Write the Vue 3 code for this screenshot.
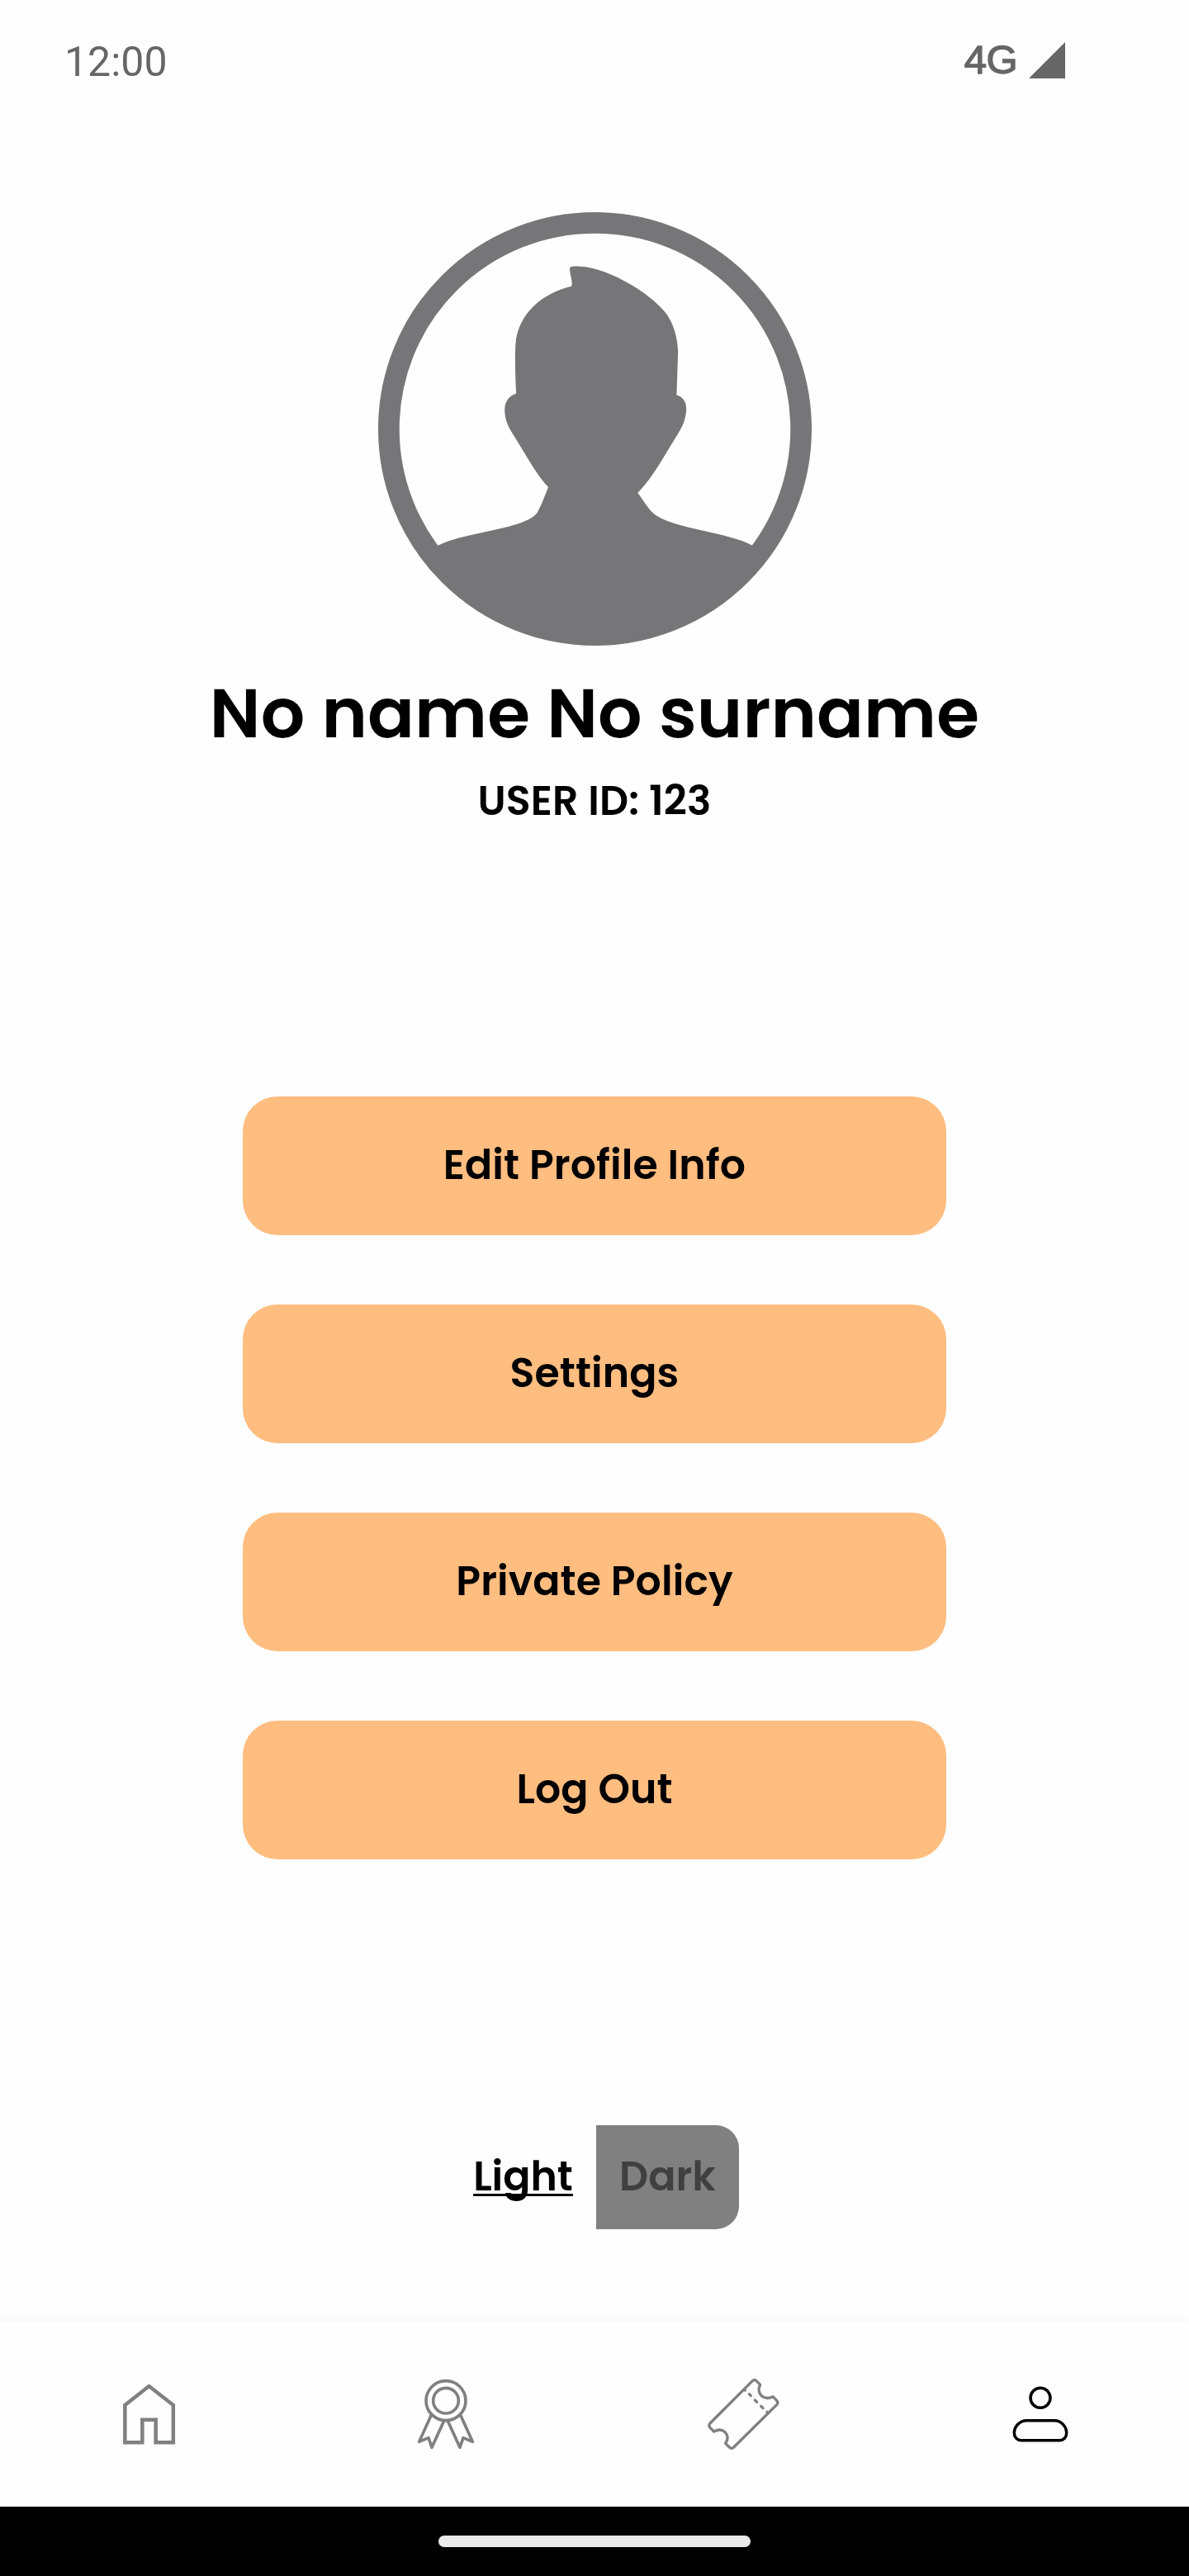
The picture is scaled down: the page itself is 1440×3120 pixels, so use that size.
<script setup>
import { ref } from 'vue'

const actions = ['Edit Profile Info', 'Settings', 'Private Policy', 'Log Out']
const theme = ref('light')
</script>

<template>
  <div class="screen">
    <header class="status">
      <span class="clock">12:00</span>
      <div class="network">
        <span class="net-label">4G</span>
        <svg class="signal" viewBox="0 0 44 44"><path d="M44 0V44H0Z" fill="#666" /></svg>
      </div>
    </header>

    <section class="profile">
      <svg class="avatar" viewBox="50 48 1470 1470">
        <circle cx="785" cy="783" r="699" fill="none" stroke="#767678" stroke-width="72" />
        <path
          fill="#767678"
          d="M254 1178C340 1132 540 1125 588 1069C602 1046 614 1013 627 980C590 945 545 860 502 793C487 768 479 745 479 718C479 688 497 669 518 663C515 600 513 540 516 495C523 395 605 322 705 299C713 290 697 250 700 237C702 230 718 231 736 232C820 235 960 312 1023 387C1052 424 1064 470 1067 520L1062 668C1084 674 1095 690 1095 716C1094 743 1086 768 1071 792C1025 865 982 948 930 1000C946 1020 963 1051 985 1071C1048 1122 1240 1134 1318 1178L1332 1215C1200 1390 1010 1500 785 1500C560 1500 370 1390 235 1215Z"
        />
      </svg>
      <h1 class="name">No name No surname</h1>
      <p class="user-id">USER ID: 123</p>
    </section>

    <main class="actions">
      <button v-for="label in actions" :key="label" class="action">{{ label }}</button>
    </main>

    <div class="theme">
      <button class="mode" :class="{ active: theme === 'light' }" @click="theme = 'light'">Light</button>
      <button class="mode dark" :class="{ active: theme === 'dark' }" @click="theme = 'dark'">Dark</button>
    </div>

    <nav class="tabs">
      <a class="tab">
        <svg viewBox="0 0 360 360" stroke-width="13.5">
          <path d="M94 159L181.5 90L269.5 159V295H206V212H157V295H94Z" />
        </svg>
      </a>
      <a class="tab">
        <svg viewBox="0 0 360 360" stroke-width="11" stroke-linejoin="round" stroke-linecap="round">
          <circle cx="180" cy="143" r="72" />
          <circle cx="180" cy="143" r="46" />
          <path d="M127 195L83 292L117 278L129 313L173 217M233 195L277 292L243 278L231 313L187 217" />
        </svg>
      </a>
      <a class="tab">
        <svg viewBox="0 0 360 360" stroke-width="10" stroke-linejoin="round" stroke-linecap="round">
          <path d="M214 71Q221 64 228 71L242 85C233 101 238 117 247 125C259 135 275 135 288 128L302 142Q309 150 302 158L146 312Q138 320 130 312L116 298C127 283 124 268 114 257C103 247 89 247 74 255L60 241Q53 233 60 225Z" />
          <path d="M184 102L187 105M202 119L208 125M223 141L230 148M245 163L252 170M267 184L270 187" />
        </svg>
      </a>
      <a class="tab current">
        <svg viewBox="0 0 360 360" stroke-width="10.5">
          <circle cx="180" cy="133" r="36" />
          <path d="M130 215H231C256 215 275 237 275 261C275 276 264 287 250 287H111C96 287 85 276 85 261C85 237 105 215 130 215Z" />
        </svg>
      </a>
    </nav>

    <footer class="gesture"><div class="pill"></div></footer>
  </div>
</template>

<style>
body {
  margin: 0;
  background: #fefefe;
}
</style>

<style scoped>
.screen {
  width: 1440px;
  height: 3120px;
  display: flex;
  flex-direction: column;
  overflow: hidden;
  background: #fefefe;
  color: #000;
  font-family: Poppins, Inter, "Liberation Sans", sans-serif;
  font-weight: 600;
}
.status {
  box-sizing: border-box;
  height: 257px;
  padding: 45px 150px 0 78px;
  display: flex;
  justify-content: space-between;
  align-items: flex-start;
  color: #666;
}
.clock {
  font-family: Roboto, sans-serif;
  font-size: 50px;
  font-weight: 400;
  line-height: 60px;
}
.network {
  display: flex;
  align-items: flex-start;
  gap: 14px;
}
.net-label {
  font-family: "Liberation Sans", Arial, sans-serif;
  font-size: 49px;
  font-weight: 400;
  line-height: 55px;
  letter-spacing: -0.5px;
  -webkit-text-stroke: 1.4px #666;
}
.signal {
  width: 44px;
  height: 44px;
  margin-top: 6px;
}
.profile {
  height: 1071px;
  display: flex;
  flex-direction: column;
  align-items: center;
}
.avatar {
  width: 525px;
  height: 525px;
  flex: none;
}
.name {
  margin: 32px 0 0;
  font-size: 84px;
  font-weight: 600;
  line-height: 100px;
  letter-spacing: 0.1px;
  white-space: nowrap;
}
.user-id {
  margin: 21px 0 0;
  font-size: 49px;
  line-height: 70px;
  letter-spacing: 0.1px;
  white-space: nowrap;
}
.actions {
  display: flex;
  flex-direction: column;
  align-items: center;
  gap: 84px;
}
button {
  border: 0;
  padding: 0 0 2px;
  background: none;
  box-sizing: border-box;
  font: 600 49px / 56px Poppins, Inter, "Liberation Sans", sans-serif;
  color: inherit;
}
.action {
  width: 852px;
  height: 168px;
  border-radius: 42px;
  background: #ffbd80;
  letter-spacing: 0.1px;
}
.theme {
  display: flex;
  justify-content: center;
  margin-top: 322px;
  height: 126px;
}
.mode {
  width: 177px;
  height: 126px;
}
.mode.active {
  text-decoration: underline;
  text-decoration-thickness: 2.5px;
  text-underline-offset: 4px;
  text-decoration-skip-ink: none;
}
.dark {
  width: 173px;
  background: #808080;
  color: #404040;
  border-radius: 0 28px 28px 0;
}
.tabs {
  margin-top: auto;
  height: 224px;
  flex: none;
  display: grid;
  grid-template-columns: repeat(4, 1fr);
  background: #fefefe;
  box-shadow: 0 -3px 10px rgba(0, 0, 0, 0.035);
}
.tab {
  display: flex;
  justify-content: center;
  padding-top: 48px;
  color: #808080;
}
.tab svg {
  width: 120px;
  height: 120px;
  fill: none;
  stroke: currentColor;
}
.current {
  color: #000;
}
.gesture {
  height: 84px;
  flex: none;
  display: flex;
  align-items: center;
  justify-content: center;
  background: #000;
}
.pill {
  width: 378px;
  height: 14px;
  border-radius: 7px;
  background: #ebebeb;
}
</style>
